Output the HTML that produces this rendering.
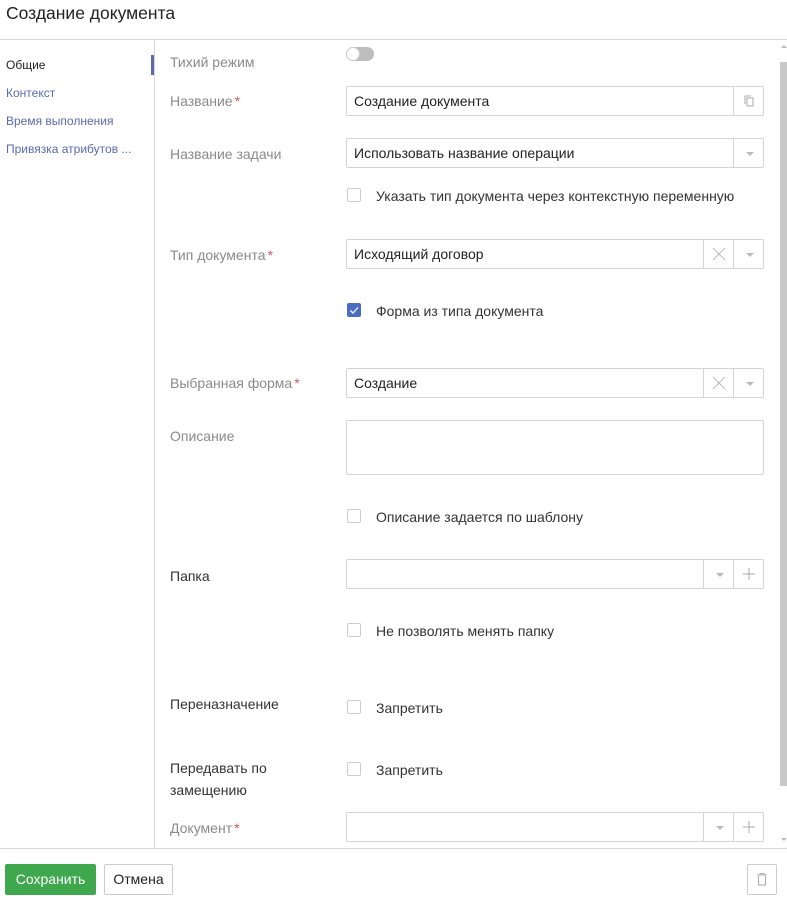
<!DOCTYPE html><html><head><meta charset="utf-8"><style>
*{box-sizing:border-box;margin:0;padding:0}
body{width:787px;height:901px;position:relative;background:#fff;font-family:"Liberation Sans","DejaVu Sans",sans-serif;font-size:14px;color:#333;overflow:hidden}
.a{position:absolute}
.lbl{position:absolute;left:170px;color:#8a8a8a;font-size:14px;line-height:18px}
.dk{color:#333}
.req{color:#d9534f;margin-left:2px}
.inp{position:absolute;left:346px;width:418px;height:30px;border:1px solid #d4d4d4;border-radius:2px;padding-left:7px;line-height:28px;color:#222}
.btn{position:absolute;top:0;height:28px;width:30px;border-left:1px solid #d4d4d4;text-align:center;color:#aaa}
.arr{position:absolute;top:13px;left:12px;width:0;height:0;border-left:4px solid transparent;border-right:4px solid transparent;border-top:4px solid #bbb}
.cb{position:absolute;left:347px;width:14px;height:14px;border:1px solid #ccc;border-radius:2px;background:#fff}
.cbl{position:absolute;left:376px;font-size:14px;color:#333;line-height:18px}
.nav{position:absolute;left:6px;font-size:12px;color:#5a6ab0}
</style></head><body>
<div class="a" style="left:6px;top:3px;font-size:17.5px;color:#222">Создание документа</div>
<div class="a" style="left:0;top:39px;width:787px;height:1px;background:#d8d8d8"></div>
<div class="a" style="left:154px;top:40px;width:1px;height:808px;background:#d8d8d8"></div>
<div class="a" style="left:151px;top:55px;width:3px;height:20px;background:#5a6ab0"></div>
<div class="nav" style="top:58px;color:#222">Общие</div>
<div class="nav" style="top:86px">Контекст</div>
<div class="nav" style="top:114px">Время выполнения</div>
<div class="nav" style="top:142px">Привязка атрибутов ...</div>
<div class="a" style="left:780px;top:62px;width:7px;height:724px;background:#c8c8c8"></div>
<div class="a" style="left:781px;top:45px;border-left:3px solid transparent;border-right:3px solid transparent;border-bottom:3px solid #bbb"></div>
<div class="a" style="left:781px;top:838px;border-left:3px solid transparent;border-right:3px solid transparent;border-top:3px solid #bbb"></div>

<div class="lbl" style="top:53px">Тихий режим</div>
<div class="a" style="left:346px;top:47px;width:28px;height:14px;border-radius:7px;background:#bdbdbd"></div>
<div class="a" style="left:346px;top:47px;width:14px;height:14px;border-radius:7px;background:#fff;border:1px solid #ccc"></div>

<div class="lbl" style="top:92px">Название<span class="req">*</span></div>
<div class="inp" style="top:86px">Создание документа<div class="btn" style="right:0"><svg width="30" height="28"><rect x="13" y="11" width="6" height="8" fill="none" stroke="#aaa"/><path d="M11 17V9h6" fill="none" stroke="#aaa"/></svg></div></div>

<div class="lbl" style="top:145px">Название задачи</div>
<div class="inp" style="top:138px">Использовать название операции<div class="btn" style="right:0"><div class="arr"></div></div></div>
<div class="cb" style="top:188px"></div><div class="cbl" style="top:187px">Указать тип документа через контекстную переменную</div>

<div class="lbl" style="top:246px">Тип документа<span class="req">*</span></div>
<div class="inp" style="top:239px">Исходящий договор<div class="btn" style="right:30px"><svg width="30" height="28"><path d="M9 8l12 12M21 8L9 20" stroke="#bbb"/></svg></div><div class="btn" style="right:0"><div class="arr"></div></div></div>
<div class="cb" style="top:303px;background:#4a6cc4;border-color:#4a6cc4"><svg width="12" height="12" style="position:absolute;left:0;top:0"><path d="M2.5 6.5l2.5 2.5 5-5.5" fill="none" stroke="#fff" stroke-width="1.3"/></svg></div><div class="cbl" style="top:302px">Форма из типа документа</div>

<div class="lbl" style="top:374px">Выбранная форма<span class="req">*</span></div>
<div class="inp" style="top:368px">Создание<div class="btn" style="right:30px"><svg width="30" height="28"><path d="M9 8l12 12M21 8L9 20" stroke="#bbb"/></svg></div><div class="btn" style="right:0"><div class="arr"></div></div></div>

<div class="lbl" style="top:427px">Описание</div>
<div class="inp" style="top:420px;height:55px"></div>
<div class="cb" style="top:509px"></div><div class="cbl" style="top:508px">Описание задается по шаблону</div>

<div class="lbl dk" style="top:567px">Папка</div>
<div class="inp" style="top:559px"><div class="btn" style="right:30px"><div class="arr"></div></div><div class="btn" style="right:0"><svg width="30" height="28"><path d="M15 8v12M9 14h12" stroke="#aaa"/></svg></div></div>
<div class="cb" style="top:623px"></div><div class="cbl" style="top:622px">Не позволять менять папку</div>

<div class="lbl dk" style="top:695px">Переназначение</div>
<div class="cb" style="top:700px"></div><div class="cbl" style="top:699px">Запретить</div>
<div class="lbl dk" style="top:757px;line-height:22px">Передавать по<br>замещению</div>
<div class="cb" style="top:762px"></div><div class="cbl" style="top:761px">Запретить</div>

<div class="lbl" style="top:819px">Документ<span class="req">*</span></div>
<div class="inp" style="top:812px"><div class="btn" style="right:30px"><div class="arr"></div></div><div class="btn" style="right:0"><svg width="30" height="28"><path d="M15 8v12M9 14h12" stroke="#aaa"/></svg></div></div>

<div class="a" style="left:0;top:848px;width:787px;height:1px;background:#d8d8d8"></div>
<div class="a" style="left:5px;top:864px;width:91px;height:31px;background:#3fa84f;border-radius:2px;color:#fff;text-align:center;line-height:31px">Сохранить</div>
<div class="a" style="left:104px;top:864px;width:69px;height:31px;border:1px solid #ccc;border-radius:2px;text-align:center;line-height:29px;color:#222">Отмена</div>
<div class="a" style="left:747px;top:864px;width:30px;height:31px;border:1px solid #ccc;border-radius:2px"><svg width="28" height="29"><path d="M9 10h10M12 10V8.5h4V10M10.5 11v9h7v-9" fill="none" stroke="#aaa"/></svg></div>
</body></html>
